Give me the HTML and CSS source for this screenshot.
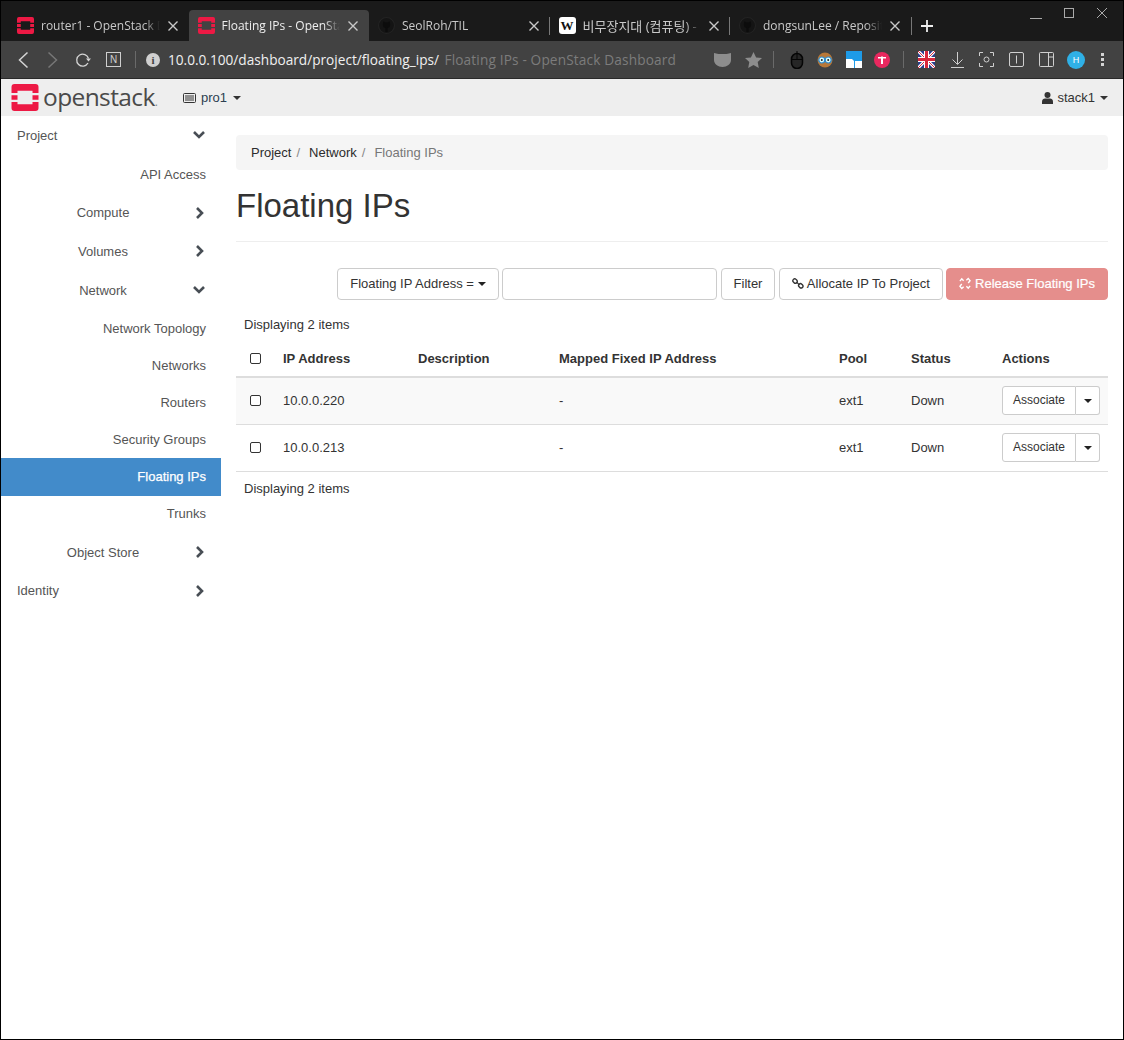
FILE: index.html
```html
<!DOCTYPE html>
<html lang="en">
<head>
<meta charset="utf-8">
<title>Floating IPs - OpenStack Dashboard</title>
<link rel="stylesheet" href="styles.css">
</head>
<body>
<svg class="defs" width="0" height="0" aria-hidden="true">
  <symbol id="os" viewBox="0 0 18 18">
    <path fill="#ed1944" d="M2 0h14a2 2 0 0 1 2 2v4h-4V4.500H4V6H0V2a2 2 0 0 1 2-2zM0 7.500h4v3H0zM14 7.500h4v3h-4zM0 12h4v1.500h10V12h4v4a2 2 0 0 1-2 2H2a2 2 0 0 1-2-2z"/>
  </symbol>
  <symbol id="gh" viewBox="0 0 16 16">
    <circle cx="8" cy="8" r="7.500" fill="#141414" stroke="#232323"/>
    <path fill="#0c0c0c" d="M5 4l1.500 1h3L11 4l.5 3c0 2-1 3-2.500 3.300V14H7v-3.700C5.500 10 4.500 9 4.500 7z"/>
  </symbol>
  <symbol id="x" viewBox="0 0 10 10">
    <path d="M.5.500l9 9M9.500.500l-9 9" stroke="currentColor" stroke-width="1.400" fill="none"/>
  </symbol>
  <symbol id="chev-r" viewBox="0 0 10 12">
    <path d="M2 1l5 5-5 5" stroke="currentColor" stroke-width="2.600" fill="none"/>
  </symbol>
  <symbol id="chev-d" viewBox="0 0 12 10">
    <path d="M1 2l5 5 5-5" stroke="currentColor" stroke-width="2.600" fill="none"/>
  </symbol>
</svg>
<div class="window">
  <div class="tabstrip">
    <div class="tab">
      <svg class="fav"><use href="#os"/></svg>
      <span class="tab-title">router1 - OpenStack Dashboard</span>
      <svg class="tab-x"><use href="#x"/></svg>
    </div>
    <div class="tab active">
      <svg class="fav"><use href="#os"/></svg>
      <span class="tab-title">Floating IPs - OpenStack Dashboard</span>
      <svg class="tab-x"><use href="#x"/></svg>
    </div>
    <div class="tab">
      <svg class="fav"><use href="#gh"/></svg>
      <span class="tab-title">SeolRoh/TIL</span>
      <svg class="tab-x"><use href="#x"/></svg>
    </div>
    <div class="tab sep">
      <span class="fav wiki">W</span>
      <span class="tab-title ko">비무장지대 (컴퓨팅) - 위키백과</span>
      <svg class="tab-x"><use href="#x"/></svg>
    </div>
    <div class="tab sep">
      <svg class="fav"><use href="#gh"/></svg>
      <span class="tab-title">dongsunLee / Repository</span>
      <svg class="tab-x"><use href="#x"/></svg>
    </div>
    <div class="newtab">
      <svg width="12" height="12" viewBox="0 0 12 12"><path d="M6 0v12M0 6h12" stroke="#eee" stroke-width="1.800"/></svg>
    </div>
    <div class="winctl">
      <svg width="12" height="12" viewBox="0 0 12 12"><path d="M0 11.500h12" stroke="#aaa"/></svg>
      <svg width="10" height="10" viewBox="0 0 10 10"><rect x=".5" y=".5" width="9" height="9" fill="none" stroke="#aaa"/></svg>
      <svg width="12" height="12" viewBox="0 0 12 12"><path d="M1 1l10 10M11 1L1 11" stroke="#aaa"/></svg>
    </div>
  </div>
  <div class="toolbar">
    <svg class="tb back" width="12" height="18" viewBox="0 0 12 18"><path d="M10.500 1.500L2.500 9l8 7.500" fill="none" stroke="#d4d4d4" stroke-width="1.500"/></svg>
    <svg class="tb fwd" width="12" height="18" viewBox="0 0 12 18"><path d="M1.500 1.500L9.500 9l-8 7.500" fill="none" stroke="#777" stroke-width="1.500"/></svg>
    <svg class="tb reload" width="16" height="16" viewBox="0 0 16 16"><path d="M13 11A6 6 0 1 1 13.500 6.500" fill="none" stroke="#d4d4d4" stroke-width="1.300"/><path d="M11 6.500h5l-2.500 3z" fill="#d4d4d4"/></svg>
    <span class="tb notion">N</span>
    <span class="vr"></span>
    <span class="info">i</span>
    <span class="url">10.0.0.100/dashboard/project/floating_ips/</span>
    <span class="pagetitle">Floating IPs - OpenStack Dashboard</span>
    <div class="tools">
      <svg width="17" height="17" viewBox="0 0 17 17"><path d="M0 2l4.500 1h8L17 2v7c0 4-4 7-8.500 7S0 13 0 9z" fill="#8d8d8d"/></svg>
      <svg class="star" width="17" height="16" viewBox="0 0 17 16"><path d="M8.500 0l2.600 5.400 5.900.7-4.300 4 1.100 5.900-5.300-2.900L3.200 16l1.100-5.900-4.300-4 5.900-.7z" fill="#8d8d8d"/></svg>
      <span class="vr short first"></span>
      <svg class="mouse" width="14" height="18" viewBox="0 0 14 18"><rect x="1.500" y="2.500" width="11" height="15" rx="5.500" fill="#262626" stroke="#050505" stroke-width="1.500"/><path d="M7 0v8.500M2 8.500h10" stroke="#050505"/></svg>
      <svg class="owl" width="16" height="16" viewBox="0 0 16 16"><circle cx="8" cy="8" r="7.500" fill="#b87838"/><circle cx="4.800" cy="8" r="3" fill="#dff" stroke="#2e8bd0" stroke-width="1.200"/><circle cx="11.200" cy="8" r="3" fill="#dff" stroke="#2e8bd0" stroke-width="1.200"/><circle cx="4.800" cy="8" r="1" fill="#222"/><circle cx="11.200" cy="8" r="1" fill="#222"/></svg>
      <svg class="box" width="16" height="17" viewBox="0 0 16 17"><rect width="16" height="17" fill="#1e9be8"/><path d="M0 8h6l2 2v7H0zM9 10h7v7H9z" fill="#fff"/></svg>
      <svg class="pink" width="16" height="16" viewBox="0 0 16 16"><circle cx="8" cy="8" r="8" fill="#e9285f"/><path d="M4 5h3v1.500H4zM9 5h3v1.500H9zM7 4.500h2V12H7z" fill="#fff"/></svg>
      <span class="vr short second"></span>
      <svg class="flag" width="17" height="17" viewBox="0 0 17 17"><rect width="17" height="17" rx="2" fill="#2b3f8c"/><path d="M0 0l17 17M17 0L0 17" stroke="#fff" stroke-width="3"/><path d="M0 0l17 17M17 0L0 17" stroke="#d8283c" stroke-width="1"/><path d="M8.500 0v17M0 8.500h17" stroke="#fff" stroke-width="5"/><path d="M8.500 0v17M0 8.500h17" stroke="#d8283c" stroke-width="3"/></svg>
      <svg class="dl" width="13" height="16" viewBox="0 0 13 16"><path d="M6.500 0v12M1.500 7.500l5 5 5-5M0 15.500h13" fill="none" stroke="#cfcfcf"/></svg>
      <svg class="shot" width="15" height="15" viewBox="0 0 15 15"><path d="M.5 4V.5H4M11 .5h3.500V4M14.500 11v3.500H11M4 14.500H.5V11" fill="none" stroke="#cfcfcf"/><circle cx="7.500" cy="7.500" r="2.500" fill="none" stroke="#cfcfcf"/></svg>
      <svg class="panel" width="15" height="15" viewBox="0 0 15 15"><rect x=".5" y=".5" width="14" height="14" rx="1.500" fill="none" stroke="#cfcfcf"/><path d="M7.500 3.500v8" stroke="#cfcfcf"/></svg>
      <svg class="side" width="15" height="15" viewBox="0 0 15 15"><rect x=".5" y=".5" width="14" height="14" rx="1" fill="none" stroke="#cfcfcf"/><path d="M9.500 .5v14M9.500 5h5" stroke="#cfcfcf"/></svg>
      <span class="avatar">H</span>
      <svg class="dots" width="3" height="13" viewBox="0 0 3 13"><path d="M0 0h3v3H0zM0 5h3v3H0zM0 10h3v3H0z" fill="#d4d4d4"/></svg>
    </div>
  </div>
  <div class="navbar">
    <svg class="brand-mark"><use href="#os"/></svg>
    <span class="brand">openstack<small>.</small></span>
    <span class="project">
      <svg width="13" height="10" viewBox="0 0 13 10"><rect x=".5" y=".5" width="12" height="9" rx="1" fill="none" stroke="#333"/><path d="M2 3h9M2 5h9M2 7h9" stroke="#333"/></svg>
      pro1 <i class="caret"></i>
    </span>
    <span class="user">
      <svg width="11" height="12" viewBox="0 0 11 12"><circle cx="5.500" cy="3" r="3" fill="#333"/><path d="M0 12V9.500C0 7.500 1.500 6.500 3 6.500h5c1.500 0 3 1 3 3V12z" fill="#333"/></svg>
      stack1 <i class="caret"></i>
    </span>
  </div>
  <div class="main">
    <nav class="sidebar">
      <a class="nav-row top"><span class="label">Project</span><svg class="cd"><use href="#chev-d"/></svg></a>
      <a class="nav-row leaf tall">API Access</a>
      <a class="nav-row group"><span class="label">Compute</span><svg class="cr"><use href="#chev-r"/></svg></a>
      <a class="nav-row group"><span class="label">Volumes</span><svg class="cr"><use href="#chev-r"/></svg></a>
      <a class="nav-row group tall"><span class="label">Network</span><svg class="cd"><use href="#chev-d"/></svg></a>
      <a class="nav-row leaf">Network Topology</a>
      <a class="nav-row leaf">Networks</a>
      <a class="nav-row leaf">Routers</a>
      <a class="nav-row leaf">Security Groups</a>
      <a class="nav-row leaf current">Floating IPs</a>
      <a class="nav-row leaf trunks">Trunks</a>
      <a class="nav-row group"><span class="label">Object Store</span><svg class="cr"><use href="#chev-r"/></svg></a>
      <a class="nav-row top"><span class="label">Identity</span><svg class="cr"><use href="#chev-r"/></svg></a>
    </nav>
    <main class="content">
      <ol class="breadcrumb">
        <li>Project</li><li class="slash">/</li><li>Network</li><li class="slash">/</li><li class="muted">Floating IPs</li>
      </ol>
      <h1>Floating IPs</h1>
      <hr>
      <div class="actions">
        <button class="btn">Floating IP Address = <i class="caret dark"></i></button>
        <input class="search" type="text" aria-label="Filter">
        <button class="btn">Filter</button>
        <button class="btn">
          <svg class="link" width="12" height="13" viewBox="0 0 13 13"><g fill="none" stroke="#333" stroke-width="1.500"><rect x=".8" y="1.800" width="5" height="4" rx="2" transform="rotate(45 3.300 3.800)"/><rect x="7" y="7" width="5" height="4" rx="2" transform="rotate(45 9.500 9)"/><path d="M5 5l3 3"/></g></svg>
          Allocate IP To Project</button>
        <button class="btn danger">
          <svg class="link" width="12" height="13" viewBox="0 0 13 13"><g fill="none" stroke="#fff" stroke-width="1.500"><path d="M1 4l2-2.500 2 2M12 9l-2 2.500-2-2M8 3l2-2 2 2.500L10 6M5 10l-2 2-2-2.500L3 7"/></g></svg>
          Release Floating IPs</button>
      </div>
      <table>
        <colgroup>
          <col class="c-check"><col class="c-ip"><col class="c-desc"><col class="c-map"><col class="c-pool"><col class="c-status"><col class="c-act">
        </colgroup>
        <caption>Displaying 2 items</caption>
        <thead>
          <tr><th><span class="check"></span></th><th>IP Address</th><th>Description</th><th>Mapped Fixed IP Address</th><th>Pool</th><th>Status</th><th>Actions</th></tr>
        </thead>
        <tbody>
          <tr class="odd"><td><span class="check"></span></td><td>10.0.0.220</td><td></td><td>-</td><td>ext1</td><td>Down</td><td><div class="split"><button class="sbtn">Associate</button><button class="sbtn tog"><i class="caret dark"></i></button></div></td></tr>
          <tr><td><span class="check"></span></td><td>10.0.0.213</td><td></td><td>-</td><td>ext1</td><td>Down</td><td><div class="split"><button class="sbtn">Associate</button><button class="sbtn tog"><i class="caret dark"></i></button></div></td></tr>
        </tbody>
        <tfoot>
          <tr><td colspan="7">Displaying 2 items</td></tr>
        </tfoot>
      </table>
    </main>
  </div>
</div>
</body>
</html>
```
FILE: styles.css
```css
* { box-sizing: border-box; }
html, body { margin: 0; height: 100%; }
body { font-family: "Liberation Sans", Arial, sans-serif; font-size: 13px; color: #333; background: #fff; }
.defs { position: absolute; }
.window { height: 1040px; border: 1px solid #000; border-top: 0; display: flex; flex-direction: column; overflow: hidden; }

.tabstrip { height: 41px; background: #1a1a1a; display: flex; align-items: flex-end; padding-left: 7px; border-top: 1px solid #000; flex: none; }
.tab { width: 180.500px; height: 31px; display: flex; align-items: center; padding: 0 11px 0 9px; color: #c9c9c9; font: 12px "Open Sans", "Noto Sans CJK KR", sans-serif; position: relative; }
.tab.active { background: #424242; color: #eee; border-radius: 4px 4px 0 0; }
.tab.sep::before { content: ""; position: absolute; left: -1px; top: 7px; height: 18px; width: 1px; background: #777; }
.fav { width: 17px; height: 17px; flex: none; margin-right: 7px; }
.wiki { background: #fff; color: #111; border-radius: 3px; font: 700 13px/17px "Liberation Serif", serif; text-align: center; }
.tab-title { flex: 1; white-space: nowrap; overflow: hidden; min-width: 0; -webkit-mask-image: linear-gradient(to left, transparent 0, #000 16px); mask-image: linear-gradient(to left, transparent 0, #000 16px); }
.tab-title.ko { font-size: 13px; }
.tab-x { width: 10px; height: 10px; margin-left: 8px; flex: none; color: #c9c9c9; }
.newtab { width: 24px; height: 31px; display: flex; align-items: center; justify-content: center; margin-left: 4px; position: relative; }
.newtab::before { content: ""; position: absolute; left: -4px; top: 7px; height: 18px; width: 1px; background: #777; }
.winctl { margin-left: auto; align-self: flex-start; display: flex; align-items: center; gap: 22px; padding: 6px 15px 0 0; }

.toolbar { height: 38px; background: #424242; display: flex; align-items: center; flex: none; border-bottom: 1px solid #2a2a2a; position: relative; }
.back { margin-left: 16px; }
.fwd { margin-left: 18px; }
.reload { margin-left: 16px; }
.notion { margin-left: 15px; width: 15px; height: 15px; border: 1px solid #cfcfcf; color: #cfcfcf; font: 10px/13px "Liberation Sans", sans-serif; text-align: center; }
.vr { width: 1px; height: 17px; background: #6a6a6a; margin-left: 14px; }
.info { margin-left: 10px; width: 14px; height: 14px; border-radius: 50%; background: #d0d0d0; color: #424242; font: 700 11px/14px "Liberation Serif", serif; text-align: center; }
.url { margin-left: 8px; color: #f0f0f0; font: 13.650px "Open Sans", sans-serif; white-space: nowrap; }
.pagetitle { margin-left: 5.500px; color: #7c7c7c; font: 13.650px "Open Sans", sans-serif; letter-spacing: .15px; white-space: nowrap; }
.tools { margin-left: auto; display: flex; align-items: center; padding-right: 19px; }
.tools .star { margin-left: 14px; }
.vr.short.first { margin-left: 11px; }
.tools .mouse { margin-left: 16px; }
.tools .owl { margin-left: 13px; }
.tools .box { margin-left: 13px; }
.tools .pink { margin-left: 12px; }
.vr.short.second { margin-left: 13px; }
.tools .flag { margin-left: 14px; }
.tools .dl { margin-left: 16px; }
.tools .shot { margin-left: 15px; }
.tools .panel { margin-left: 15px; }
.tools .side { margin-left: 15px; }
.tools .avatar { margin-left: 13px; width: 18px; height: 18px; border-radius: 50%; background: #2fb0e6; color: #fff; font: 9px/18px "Liberation Sans", sans-serif; text-align: center; }
.tools .dots { margin-left: 16px; }

.navbar { height: 37px; background: #eee; display: flex; align-items: center; flex: none; padding: 0 15px 0 10px; }
.brand-mark { width: 28px; height: 27px; flex: none; }
.brand { margin-left: 4px; font: 24.500px/1 "Open Sans", sans-serif; letter-spacing: -.6px; color: #4a4a4a; width: 126px; }
.brand small { font-size: 12px; color: #888; }
.project { margin-left: 14px; display: flex; align-items: center; gap: 5px; color: #2c3e50; font-size: 13px; }
.user { margin-left: auto; display: flex; align-items: center; gap: 4px; color: #333; font-size: 13px; }
.caret { display: inline-block; width: 0; height: 0; border-top: 4px solid #333; border-left: 4px solid transparent; border-right: 4px solid transparent; vertical-align: middle; margin-left: 1px; }

.main { flex: 1; display: flex; min-height: 0; }
.sidebar { width: 220px; flex: none; display: flex; flex-direction: column; }
.nav-row { display: flex; align-items: center; color: #555; white-space: nowrap; flex: none; }
.nav-row svg { flex: none; color: #484e55; }
.leaf { height: 37px; justify-content: flex-end; padding-right: 15px; }
.leaf.tall { height: 39px; }
.leaf.trunks { height: 36.500px; margin-bottom: 1px; }
.group, .top { height: 38.500px; }
.group { padding-left: 15px; }
.top { padding-left: 16px; }
.group .label { flex: 0 0 174px; text-align: center; }
.top .label { flex: 0 0 173px; }
.group.tall { height: 39px; }
.cr { width: 10px; height: 12px; margin-left: 5px; }
.cd { width: 12px; height: 10px; margin-left: 3px; }
.current { background: #428bca; color: #fff; height: 38px; -webkit-text-stroke: .25px #fff; }

.content { flex: 1; padding: 19px 15px 0 15px; min-width: 0; }
.breadcrumb { list-style: none; margin: 0; padding: 0 15px; height: 35px; background: #f5f5f5; border-radius: 4px; display: flex; align-items: center; gap: 5px; color: #2c2c2c; }
.breadcrumb .slash { color: #888; margin-right: 4px; }
.breadcrumb .muted { color: #777; }
h1 { margin: 16px 0 0; font-size: 33px; font-weight: 400; line-height: 40px; color: #333; height: 40px; }
hr { border: 0; border-top: 1px solid #eee; margin: 15px 0 0; }
.actions { display: flex; justify-content: flex-end; gap: 3.500px; margin-top: 26px; height: 32px; }
.btn { height: 32px; border: 1px solid #ccc; border-radius: 4px; background: #fff; color: #333; font: 13px "Liberation Sans", sans-serif; padding: 0 12px 2px; white-space: nowrap; }
.btn .link { vertical-align: -2px; }
.btn.danger { background: #e58e8c; border-color: #e58e8c; color: #fff; -webkit-text-stroke: .2px #fff; }
.search { width: 215px; height: 32px; border: 1px solid #ccc; border-radius: 4px; background: #fff; }
table { width: 100%; border-collapse: collapse; table-layout: fixed; }
.c-check { width: 39px; }
.c-ip { width: 135px; }
.c-desc { width: 141px; }
.c-map { width: 280px; }
.c-pool { width: 72px; }
.c-status { width: 91px; }
caption { text-align: left; padding: 15px 8px 5px; color: #333; line-height: 20px; }
th { height: 37px; text-align: left; padding: 1px 8px 0; font-weight: 700; border-bottom: 2px solid #ddd; color: #333; }
td { height: 47px; padding: 0 8px 1px; border-bottom: 1px solid #ddd; color: #333; }
tr.odd td { background: #f9f9f9; }
tfoot td { border-bottom: 0; height: 36px; }
.check { display: block; width: 11px; height: 11px; border: 1px solid #333; border-radius: 2px; margin-left: 6px; background: #fff; }
.split { display: flex; }
.sbtn { height: 29px; border: 1px solid #ccc; background: #fff; color: #333; font: 12px "Liberation Sans", sans-serif; width: 74px; border-radius: 3px 0 0 3px; padding: 0; }
.sbtn.tog { width: 24px; border-left: 0; border-radius: 0 3px 3px 0; }
.caret.dark { border-top-color: #222; margin-left: 0; }
```
